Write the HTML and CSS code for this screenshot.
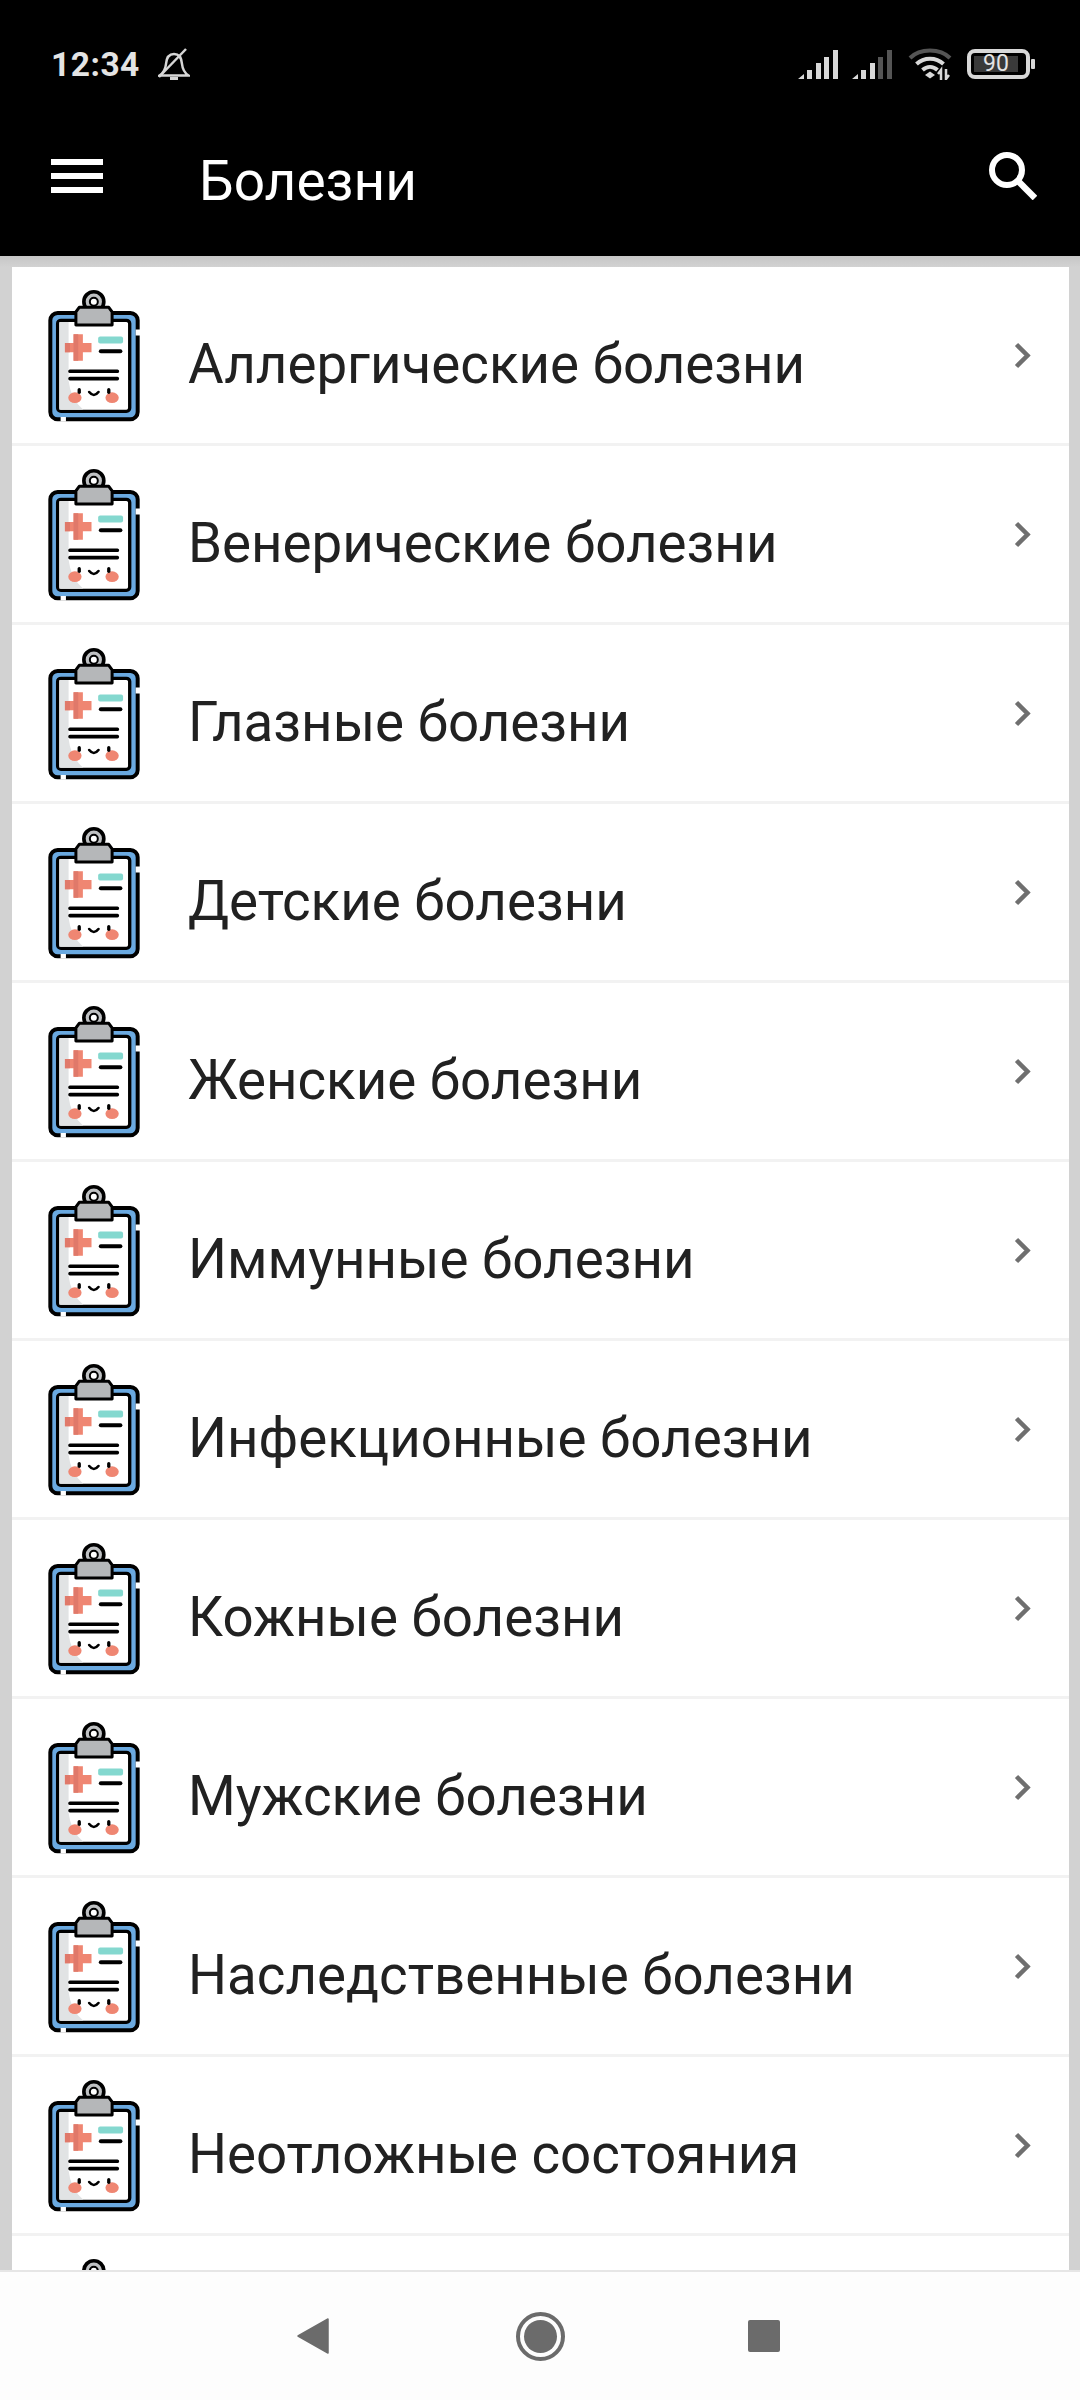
FILE: index.html
```html
<!DOCTYPE html>
<html lang="ru">
<head>
    <meta charset="UTF-8">
    <meta name="viewport" content="width=device-width, initial-scale=1.0">
    <title>Болезни</title>
    <link rel="stylesheet" href="styles.css">
</head>
<body>

<svg class="defs" width="0" height="0">
    <symbol id="clipboard" viewBox="84 54 280 400">
        <rect x="91" y="126" width="263" height="320" rx="22" fill="#6aa9e0" stroke="#000" stroke-width="12"/>
        <path d="M355 176V194M122 446H138" stroke="#fff" stroke-width="14"/>
        <rect x="113" y="148" width="217" height="274" rx="10" fill="#fff" stroke="#000" stroke-width="10"/>
        <path d="M118 153H146V330Q152 385 190 417H118Z" fill="#e1e3e4"/>
        <path d="M161 190H189V216H215V244H189V270H161V244H135V216H161Z" fill="#ef8672"/>
        <path d="M135 216H150V244H135ZM161 190H175V270H161Z" fill="#e0796a"/>
        <rect x="235" y="197" width="75" height="21" rx="6" fill="#84d8cf"/>
        <rect x="237" y="235" width="71" height="12" rx="6" fill="#000"/>
        <rect x="145" y="296" width="153" height="11" rx="5" fill="#000"/>
        <rect x="145" y="318" width="153" height="11" rx="5" fill="#000"/>
        <ellipse cx="165" cy="381" rx="20" ry="16" fill="#ef8672"/>
        <ellipse cx="277" cy="381" rx="20" ry="16" fill="#ef8672"/>
        <rect x="173" y="352" width="10" height="18" rx="5" fill="#000"/>
        <rect x="262" y="352" width="10" height="18" rx="5" fill="#000"/>
        <path d="M208 364Q222 382 236 364" fill="none" stroke="#000" stroke-width="8" stroke-linecap="round"/>
        <circle cx="222" cy="92" r="30" fill="#bfc1c3" stroke="#000" stroke-width="11"/>
        <circle cx="222" cy="92" r="12" fill="#fff" stroke="#000" stroke-width="6"/>
        <path d="M178 109H267L277 123V162H168V123Z" fill="#b5b7b9" stroke="#000" stroke-width="9" stroke-linejoin="round"/>
    </symbol>
    <symbol id="chevron" viewBox="0 0 18 27">
        <path d="M2.500 2.500L13.500 13.500L2.500 24.500" fill="none" stroke="#6f6f6f" stroke-width="4.500"/>
    </symbol>
</svg>

<header class="appbar">
    <div class="status">
        <span class="clock">12:34</span>
        <svg class="bell" viewBox="0 0 32 32" width="32" height="32">
            <path d="M1.500 27.500C6 24.500 7.500 21 8 16C8.500 9.500 11 6 16 6C21 6 23.500 9.500 24 16C24.500 21 26 24.500 30.500 27.500Z" fill="none" stroke="#d6d6d6" stroke-width="2.500"/>
            <path d="M12 30.500H20" stroke="#d6d6d6" stroke-width="3"/>
            <path d="M1 29L28 1" stroke="#d6d6d6" stroke-width="2.500"/>
        </svg>
        <div class="status-right">
            <svg class="signal" viewBox="0 0 40 29" width="40" height="29">
                <path d="M0 29L6 24V29ZM9 20H14V29H9ZM18 13H23V29H18ZM26 7H31V29H26ZM35 0H40V29H35Z" fill="#d8d8d8"/>
            </svg>
            <svg class="signal" viewBox="0 0 40 29" width="40" height="29">
                <path d="M0 29L6 24V29ZM9 20H14V29H9ZM18 13H23V29H18Z" fill="#d8d8d8"/>
                <path d="M26 7H31V29H26ZM35 0H40V29H35Z" fill="#555"/>
            </svg>
            <svg class="wifi" viewBox="0 0 44 32" width="44" height="32">
                <path d="M2 10C12 0 32 0 42 10" fill="none" stroke="#555" stroke-width="4"/>
                <path d="M8.500 16C16 9 28 9 35.500 16" fill="none" stroke="#d8d8d8" stroke-width="4"/>
                <path d="M14.500 22C19 18 25 18 29.500 22" fill="none" stroke="#d8d8d8" stroke-width="4"/>
                <path d="M17 27L22 23.500L27 27L22 30.500Z" fill="#d8d8d8"/>
                <path d="M33 32V22L30 26M38 21V31L41 27" fill="none" stroke="#d8d8d8" stroke-width="2.500"/>
            </svg>
            <div class="battery">
                <div class="battery-body"><span class="battery-level">90</span></div>
                <div class="battery-nub"></div>
            </div>
        </div>
    </div>
    <div class="toolbar">
        <div class="menu-icon"><span></span><span></span><span></span></div>
        <h1 class="title">Болезни</h1>
        <svg class="search" viewBox="0 0 48 48" width="48" height="48">
            <circle cx="18" cy="18" r="15" fill="none" stroke="#fff" stroke-width="6"/>
            <path d="M29 29L46 46" stroke="#fff" stroke-width="6.500"/>
        </svg>
    </div>
</header>

<main class="content">
    <ul class="list">
        <li class="row"><svg class="row-icon"><use href="#clipboard"/></svg><span class="row-label">Аллергические болезни</span><svg class="chevron"><use href="#chevron"/></svg></li>
        <li class="row"><svg class="row-icon"><use href="#clipboard"/></svg><span class="row-label">Венерические болезни</span><svg class="chevron"><use href="#chevron"/></svg></li>
        <li class="row"><svg class="row-icon"><use href="#clipboard"/></svg><span class="row-label">Глазные болезни</span><svg class="chevron"><use href="#chevron"/></svg></li>
        <li class="row"><svg class="row-icon"><use href="#clipboard"/></svg><span class="row-label">Детские болезни</span><svg class="chevron"><use href="#chevron"/></svg></li>
        <li class="row"><svg class="row-icon"><use href="#clipboard"/></svg><span class="row-label">Женские болезни</span><svg class="chevron"><use href="#chevron"/></svg></li>
        <li class="row"><svg class="row-icon"><use href="#clipboard"/></svg><span class="row-label">Иммунные болезни</span><svg class="chevron"><use href="#chevron"/></svg></li>
        <li class="row"><svg class="row-icon"><use href="#clipboard"/></svg><span class="row-label">Инфекционные болезни</span><svg class="chevron"><use href="#chevron"/></svg></li>
        <li class="row"><svg class="row-icon"><use href="#clipboard"/></svg><span class="row-label">Кожные болезни</span><svg class="chevron"><use href="#chevron"/></svg></li>
        <li class="row"><svg class="row-icon"><use href="#clipboard"/></svg><span class="row-label">Мужские болезни</span><svg class="chevron"><use href="#chevron"/></svg></li>
        <li class="row"><svg class="row-icon"><use href="#clipboard"/></svg><span class="row-label">Наследственные болезни</span><svg class="chevron"><use href="#chevron"/></svg></li>
        <li class="row"><svg class="row-icon"><use href="#clipboard"/></svg><span class="row-label">Неотложные состояния</span><svg class="chevron"><use href="#chevron"/></svg></li>
        <li class="row"><svg class="row-icon"><use href="#clipboard"/></svg></li>
    </ul>
</main>

<nav class="navbar">
    <svg class="nav-back" viewBox="0 0 32 36" width="32" height="36"><path d="M31 1V35L1 18Z" fill="#6b6b6b" stroke="#6b6b6b" stroke-width="1.500" stroke-linejoin="round"/></svg>
    <div class="nav-home"><div class="nav-home-dot"></div></div>
    <div class="nav-recent"></div>
</nav>

</body>
</html>
```

FILE: styles.css
```css
html, body {
    margin: 0;
    padding: 0;
}
body {
    width: 1080px;
    height: 2400px;
    overflow: hidden;
    display: flex;
    flex-direction: column;
    font-family: Roboto, sans-serif;
    background-color: #d2d2d2;
}
.defs {
    position: absolute;
}
.appbar {
    height: 256px;
    flex-shrink: 0;
    background-color: #000;
    color: #fff;
}
.status {
    display: flex;
    align-items: center;
    height: 64px;
    padding: 32px 45px 0 51px;
}
.clock {
    font-size: 33.500px;
    font-weight: 700;
    color: #e4e4e4;
    letter-spacing: 0.500px;
}
.bell {
    margin-left: 18px;
}
.status-right {
    margin-left: auto;
    display: flex;
    align-items: center;
}
.signal {
    margin-right: 14px;
}
.wifi {
    margin-left: 2px;
    margin-right: 15px;
}
.battery {
    display: flex;
    align-items: center;
}
.battery-body {
    width: 63px;
    height: 30px;
    box-sizing: border-box;
    border: 4px solid #d8d8d8;
    border-radius: 8px;
    padding: 3px;
}
.battery-level {
    display: block;
    width: 44px;
    height: 16px;
    background-color: #3a3a3a;
    color: #e4e4e4;
    font-size: 23px;
    line-height: 16px;
    text-align: center;
}
.battery-nub {
    width: 4px;
    height: 10px;
    margin-left: 1px;
    background-color: #d8d8d8;
    border-radius: 1px;
}
.toolbar {
    display: flex;
    align-items: center;
    height: 160px;
    padding: 0 43px 0 51px;
}
.menu-icon {
    width: 52px;
    height: 34px;
    display: flex;
    flex-direction: column;
    justify-content: space-between;
}
.menu-icon span {
    height: 6px;
    background-color: #fff;
}
.title {
    margin: 10px 0 0 96px;
    font-size: 55px;
    font-weight: 400;
}
.search {
    margin-left: auto;
}
.content {
    flex: 1;
    min-height: 0;
    overflow: hidden;
    padding: 11px 11px 0 12px;
    background: linear-gradient(#c6c6c6, #d2d2d2 11px);
}
.list {
    list-style: none;
    margin: 0;
    padding: 0;
    background-color: #fff;
}
.row {
    display: flex;
    align-items: center;
    height: 179px;
    box-sizing: border-box;
    border-bottom: 3px solid #f2f2f2;
    padding: 0 37px 0 36px;
}
.row-icon {
    width: 93px;
    height: 133px;
    flex-shrink: 0;
}
.row-label {
    padding-top: 18px;
    margin-left: 47px;
    font-size: 54.700px;
    color: #212121;
}
.chevron {
    width: 18px;
    height: 27px;
    margin-left: auto;
}
.navbar {
    height: 130px;
    flex-shrink: 0;
    box-sizing: border-box;
    border-top: 2px solid #e6e6e6;
    background-color: #fdfdfd;
    display: flex;
    align-items: center;
    padding: 0 300px 0 297px;
    justify-content: space-between;
}
.nav-home {
    width: 49px;
    height: 49px;
    margin-left: 4px;
    box-sizing: border-box;
    border: 4px solid #6b6b6b;
    border-radius: 50%;
    display: flex;
    align-items: center;
    justify-content: center;
}
.nav-home-dot {
    width: 33px;
    height: 33px;
    border-radius: 50%;
    background-color: #6b6b6b;
}
.nav-recent {
    width: 32px;
    height: 32px;
    border-radius: 2px;
    background-color: #6b6b6b;
}
```
